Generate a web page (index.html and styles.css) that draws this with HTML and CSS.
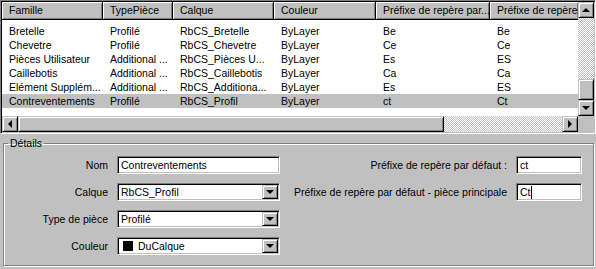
FILE: index.html
```html
<!DOCTYPE html>
<html lang="fr">
<head>
    <meta charset="UTF-8">
    <title>Familles de pièces</title>
    <link rel="stylesheet" href="styles.css">
</head>
<body>

    <!-- Liste des familles -->
    <div class="list">
        <div class="list-top">
            <div class="cols">
                <div class="head">
                    <span>Famille</span>
                    <span>TypePièce</span>
                    <span>Calque</span>
                    <span>Couleur</span>
                    <span>Préfixe de repère par...</span>
                    <span>Préfixe de repère par défaut</span>
                </div>
                <div class="rows">
                    <div class="row"><span>Bretelle</span><span>Profilé</span><span>RbCS_Bretelle</span><span>ByLayer</span><span>Be</span><span>Be</span></div>
                    <div class="row"><span>Chevetre</span><span>Profilé</span><span>RbCS_Chevetre</span><span>ByLayer</span><span>Ce</span><span>Ce</span></div>
                    <div class="row"><span>Pièces Utilisateur</span><span>Additional ...</span><span>RbCS_Pièces U...</span><span>ByLayer</span><span>Es</span><span>ES</span></div>
                    <div class="row"><span>Caillebotis</span><span>Additional ...</span><span>RbCS_Caillebotis</span><span>ByLayer</span><span>Ca</span><span>Ca</span></div>
                    <div class="row"><span>Elément Supplém...</span><span>Additional ...</span><span>RbCS_Additiona...</span><span>ByLayer</span><span>Es</span><span>ES</span></div>
                    <div class="row sel"><span>Contreventements</span><span>Profilé</span><span>RbCS_Profil</span><span>ByLayer</span><span>ct</span><span>Ct</span></div>
                </div>
            </div>
            <div class="vscroll">
                <div class="sbtn"><i class="tri up"></i></div>
                <div class="track"></div>
                <div class="thumb"></div>
                <div class="sbtn"><i class="tri down"></i></div>
            </div>
        </div>
        <div class="hscroll-row">
            <div class="hscroll">
                <div class="sbtn"><i class="tri left"></i></div>
                <div class="hthumb"></div>
                <div class="track"></div>
                <div class="sbtn"><i class="tri right"></i></div>
            </div>
            <div class="corner"></div>
        </div>
    </div>

    <!-- Détails -->
    <fieldset class="details">
        <legend>Détails</legend>
        <div class="form">
            <label class="lbl">Nom</label>
            <div class="field edit">Contreventements</div>
            <label class="lbl">Préfixe de repère par défaut :</label>
            <div class="field edit small">ct</div>

            <label class="lbl">Calque</label>
            <div class="field combo"><span>RbCS_Profil</span><div class="sbtn"><i class="tri down"></i></div></div>
            <label class="lbl">Préfixe de repère par défaut - pièce principale</label>
            <div class="field edit small focus">Ct<i class="caret"></i></div>

            <label class="lbl">Type de pièce</label>
            <div class="field combo"><span>Profilé</span><div class="sbtn"><i class="tri down"></i></div></div>
            <span></span><span></span>

            <label class="lbl">Couleur</label>
            <div class="field combo"><span><i class="swatch"></i>DuCalque</span><div class="sbtn"><i class="tri down"></i></div></div>
            <span></span><span></span>
        </div>
    </fieldset>

</body>
</html>
```

FILE: styles.css
```css
/* Base */
* {
    box-sizing: border-box;
}

body {
    margin: 0;
    width: 596px;
    height: 269px;
    overflow: hidden;
    background: #c0c0c0;
    color: #000;
    font-family: "Liberation Sans", Arial, sans-serif;
    font-size: 10.5px;
}

/* List view */
.list {
    width: 596px;
    height: 134px;
    padding: 1px;
    border: 1px solid;
    border-color: #808080 #fff #fff #808080;
    box-shadow: inset 1px 1px #000, inset -1px -1px #c0c0c0;
    display: flex;
    flex-direction: column;
}

.list-top {
    display: flex;
    height: 114px;
    background: #fff;
}

.cols {
    flex: 1;
    overflow: hidden;
}

.head,
.row {
    display: grid;
    grid-template-columns: 101px 70px 101px 102px 114px 88px;
}

.head span {
    height: 18px;
    line-height: 16px;
    padding-left: 7px;
    white-space: nowrap;
    overflow: hidden;
    background: #c0c0c0;
    border-right: 1px solid #000;
    border-bottom: 1px solid #000;
    box-shadow: inset 1px 1px #fff, inset -1px -1px #808080;
}

.head span:last-child {
    border-right: none;
}

.rows {
    padding-top: 4px;
}

.row {
    height: 14px;
    line-height: 14px;
}

.row span {
    padding-left: 7px;
    white-space: nowrap;
    overflow: hidden;
}

.row.sel {
    background: #c0c0c0;
}

/* Scrollbars */
.sbtn {
    width: 16px;
    height: 16px;
    flex: none;
    background: #c0c0c0;
    border: 1px solid;
    border-color: #c0c0c0 #000 #000 #c0c0c0;
    box-shadow: inset 1px 1px #fff, inset -1px -1px #808080;
    display: flex;
    align-items: center;
    justify-content: center;
}

.track {
    flex: 1;
    background-color: #fff;
    background-image: repeating-conic-gradient(#c0c0c0 0 25%, #fff 0 50%);
    background-size: 2px 2px;
}

.vscroll {
    width: 16px;
    display: flex;
    flex-direction: column;
}

.thumb {
    height: 21px;
    background: #c0c0c0;
    border: 1px solid;
    border-color: #c0c0c0 #000 #000 #c0c0c0;
    box-shadow: inset 1px 1px #fff, inset -1px -1px #808080;
}

.hscroll-row {
    display: flex;
    height: 16px;
}

.hscroll {
    flex: 1;
    display: flex;
}

.hthumb {
    width: 426px;
    background: #c0c0c0;
    border: 1px solid;
    border-color: #c0c0c0 #000 #000 #c0c0c0;
    box-shadow: inset 1px 1px #fff, inset -1px -1px #808080;
}

.corner {
    width: 16px;
    background: #c0c0c0;
}

/* Arrow glyphs */
.tri {
    width: 0;
    height: 0;
    border: 4px solid transparent;
}

.tri.up {
    border-bottom-color: #000;
    border-top-width: 0;
}

.tri.down {
    border-top-color: #000;
    border-bottom-width: 0;
}

.tri.left {
    border-right-color: #000;
    border-left-width: 0;
}

.tri.right {
    border-left-color: #000;
    border-right-width: 0;
}

/* Détails group */
.details {
    margin: 3px 2px 0 3px;
    height: 129px;
    padding: 7px 0 0 0;
    border: 1px solid #808080;
    box-shadow: 1px 1px #fff, inset 1px 1px #fff;
}

.details legend {
    padding: 0 2px;
    margin-left: 4px;
}

.form {
    display: grid;
    grid-template-columns: 104px 163px 218px 66px;
    grid-auto-rows: 18px;
    row-gap: 9px;
    column-gap: 9px;
    align-items: center;
}

.lbl {
    text-align: right;
    white-space: nowrap;
}

.field {
    height: 18px;
    background: #fff;
    border: 1px solid;
    border-color: #808080 #fff #fff #808080;
    box-shadow: inset 1px 1px #000, inset -1px -1px #c0c0c0;
    padding: 0 2px 0 3px;
    line-height: 16px;
    white-space: nowrap;
    display: flex;
    align-items: center;
}

.combo span {
    flex: 1;
    display: flex;
    align-items: center;
}

.combo .sbtn {
    margin: 0 -1px 0 0;
    height: 14px;
}

.swatch {
    display: inline-block;
    width: 10px;
    height: 10px;
    background: #000;
    margin: 0 5px 0 2px;
}

.caret {
    display: inline-block;
    width: 1px;
    height: 13px;
    background: #000;
}
```
